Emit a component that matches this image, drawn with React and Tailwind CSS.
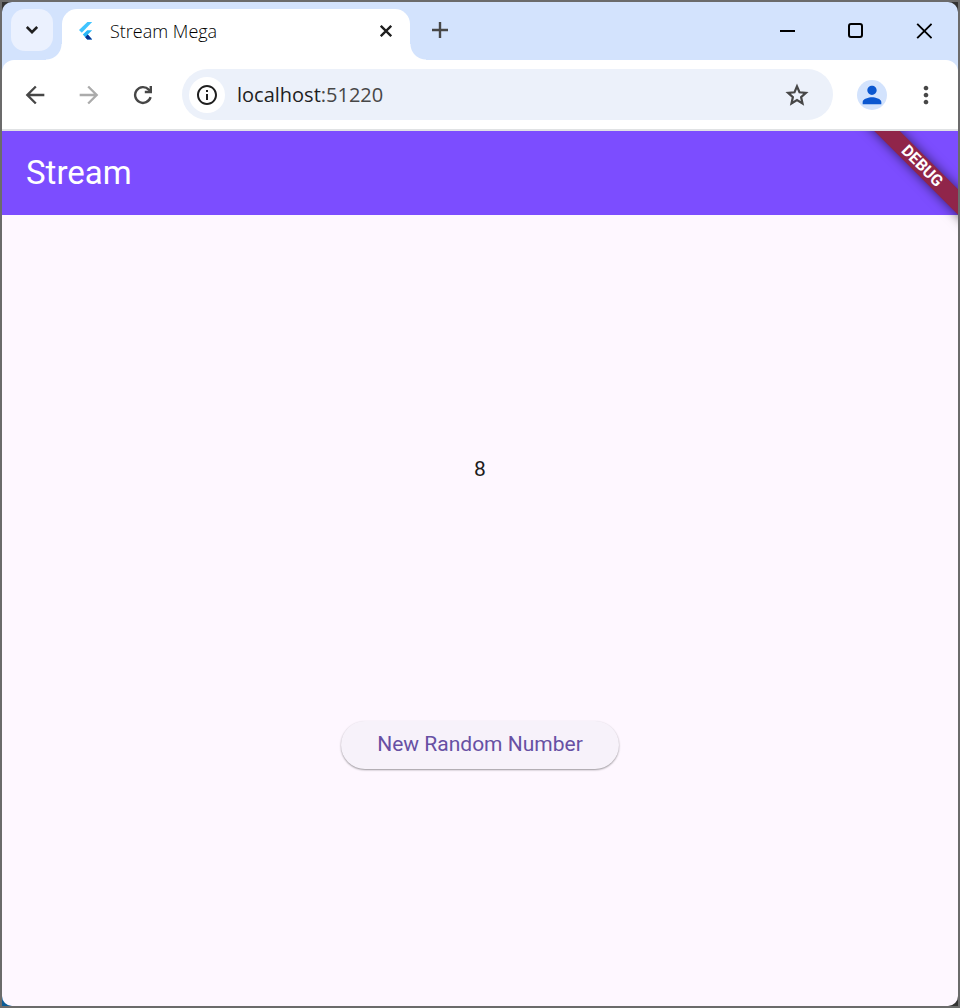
import { MdArrowBack, MdArrowForward, MdPerson, MdMoreVert, MdInfoOutline } from "react-icons/md";

const iconButton = "flex shrink-0 items-center justify-center rounded-full";

function FlutterLogo() {
  return (
    <svg viewBox="0 0 16 20" className="h-5 w-4 shrink-0" aria-hidden="true">
      <path d="M9.4 1H14.2L3.8 11.8 1 9.1Z" fill="#40c4ff" />
      <path d="M9.2 9.2H14.2L9.8 13.6 14.2 18.4H9.2L4.8 13.6Z" fill="#29b6f6" />
      <path d="M7.2 16.2 9.8 13.6 14.2 18.4H9.2Z" fill="#0a2f8f" />
    </svg>
  );
}

function ReloadIcon() {
  return (
    <svg viewBox="0 0 20 20" className="size-5" fill="none" stroke="currentColor" strokeWidth="2.4" aria-hidden="true">
      <path d="M17.6 12.2A7.9 7.9 0 1 1 15.8 4.6L17.6 6.4" />
      <path d="M17.8 1V7H11.8" />
    </svg>
  );
}

function StarIcon() {
  return (
    <svg viewBox="0 0 24 24" className="size-6" fill="none" stroke="currentColor" strokeWidth="2.2" aria-hidden="true">
      <path d="M12 3.4 14.5 9.3 20.9 9.9 16.1 14.1 17.5 20.4 12 17.1 6.5 20.4 7.9 14.1 3.1 9.9 9.5 9.3Z" />
    </svg>
  );
}

function TabStrip() {
  return (
    <div className="flex h-[58px] items-start bg-[#d3e3fd] text-[#1f1f1f]">
      <button type="button" aria-label="Search tabs" className="mt-[7px] ml-[9px] flex size-[42px] shrink-0 items-center justify-center rounded-[14px] bg-[#ebf1fe]">
        <svg viewBox="0 0 12 8" className="h-2 w-3" fill="none" stroke="currentColor" strokeWidth="2.6" aria-hidden="true">
          <path d="M.8 1 6 6.2 11.2 1" />
        </svg>
      </button>
      <div className="relative mt-[7px] ml-[9px] flex h-[51px] w-[348px] items-center rounded-t-[15px] bg-white pr-4 pb-2 pl-4">
        <span className="absolute bottom-0 -left-4 size-4 bg-[radial-gradient(circle_at_0_0,transparent_15px,white_16px)]" />
        <span className="absolute -right-4 bottom-0 size-4 bg-[radial-gradient(circle_at_100%_0,transparent_15px,white_16px)]" />
        <FlutterLogo />
        <span className="ml-4 grow font-['Open_Sans',sans-serif] text-lg font-light text-black">Stream Mega</span>
        <button type="button" aria-label="Close tab" className="flex size-4 items-center justify-center">
          <svg viewBox="0 0 12 12" className="size-3" stroke="currentColor" strokeWidth="2.3" aria-hidden="true">
            <path d="M.8.8 11.2 11.2M11.2.8.8 11.2" />
          </svg>
        </button>
      </div>
      <button type="button" aria-label="New tab" className="mt-[18px] ml-5 flex size-5 items-center justify-center text-[#474747]">
        <svg viewBox="0 0 16 16" className="size-4" stroke="currentColor" strokeWidth="2.4" aria-hidden="true">
          <path d="M8 0V16M0 8H16" />
        </svg>
      </button>
      <div className="ml-auto flex h-[58px] text-black">
        <button type="button" aria-label="Minimize" className="flex w-[68px] items-center justify-center">
          <svg viewBox="0 0 16 16" className="size-4" stroke="currentColor" strokeWidth="2" aria-hidden="true"><path d="M0 8H15" /></svg>
        </button>
        <button type="button" aria-label="Maximize" className="flex w-[68px] items-center justify-center">
          <svg viewBox="0 0 16 16" className="size-4" fill="none" stroke="currentColor" strokeWidth="2" aria-hidden="true"><rect x="1" y="1" width="13" height="13" rx="2" /></svg>
        </button>
        <button type="button" aria-label="Close" className="flex w-[68px] items-center justify-center">
          <svg viewBox="0 0 16 16" className="size-4" stroke="currentColor" strokeWidth="1.9" aria-hidden="true"><path d="M1.2.8 15.6 15.2M15.6.8 1.2 15.2" /></svg>
        </button>
      </div>
    </div>
  );
}

function Toolbar() {
  return (
    <div className="bg-[#d3e3fd]">
      <div className="flex h-[71px] items-center rounded-t-xl border-b-2 border-[#e0e2e4] bg-white pl-[9px] text-[#474747]">
        <div className="flex">
          <button type="button" aria-label="Back" className={`${iconButton} h-12 w-12`}><MdArrowBack size={28} /></button>
          <button type="button" aria-label="Forward" disabled className={`${iconButton} ml-1.5 h-12 w-12 text-[#ababab]`}><MdArrowForward size={28} /></button>
          <button type="button" aria-label="Reload" className={`${iconButton} ml-1.5 h-12 w-12`}><ReloadIcon /></button>
        </div>
        <div className="ml-[15px] flex h-[51px] grow items-center rounded-full bg-[#ecf1fa] pr-6 pl-[7px]">
          <button type="button" aria-label="View site information" className={`${iconButton} size-9 bg-white text-[#1f1f1f]`}><MdInfoOutline size={24} /></button>
          <div contentEditable suppressContentEditableWarning role="textbox" aria-label="Address" className="ml-3 grow font-['Open_Sans',sans-serif] text-xl text-[#1f1f1f] outline-none">
            localhost<span className="text-[#474747]">:51220</span>
          </div>
          <button type="button" aria-label="Bookmark this tab" className={iconButton}><StarIcon /></button>
        </div>
        <button type="button" aria-label="Profile" className={`${iconButton} ml-6 size-[30px] bg-[#d3e3fd] text-[#0b57d0]`}><MdPerson size={28} /></button>
        <button type="button" aria-label="Menu" className={`${iconButton} mr-[18px] ml-[25px]`}><MdMoreVert size={28} /></button>
      </div>
    </div>
  );
}

export default function App() {
  return (
    <div className="flex min-h-screen flex-col border-2 border-[#6b6b6b] bg-[linear-gradient(to_top_right,#0b5c96_5%,#333333_10%)]">
      <div className="flex grow flex-col overflow-hidden rounded-[10px]">
        <TabStrip />
        <Toolbar />
        <div className="relative flex grow flex-col overflow-hidden bg-[#fef7ff] font-[Roboto,sans-serif]">
          <header className="flex h-[84px] items-center bg-[#7c4dff] px-6">
            <h1 className="text-[33px] text-white">Stream</h1>
          </header>
          <main className="flex grow flex-col items-center justify-evenly pt-0.5">
            <p className="text-[21px] leading-[30px] text-[#1d1b20]">8</p>
            <button type="button" className="h-12 rounded-full bg-[#f7f2fa] px-9 text-[21px] text-[#6750a4] shadow-[0_1px_2px_rgba(0,0,0,0.4)]">New Random Number</button>
          </main>
          <div className="absolute top-[26px] right-[-44px] flex h-[18px] w-40 rotate-45 items-center justify-center bg-[#90254a] text-base font-bold text-white shadow-[0_0_12px_rgba(0,0,0,0.6)]">DEBUG</div>
        </div>
      </div>
    </div>
  );
}
